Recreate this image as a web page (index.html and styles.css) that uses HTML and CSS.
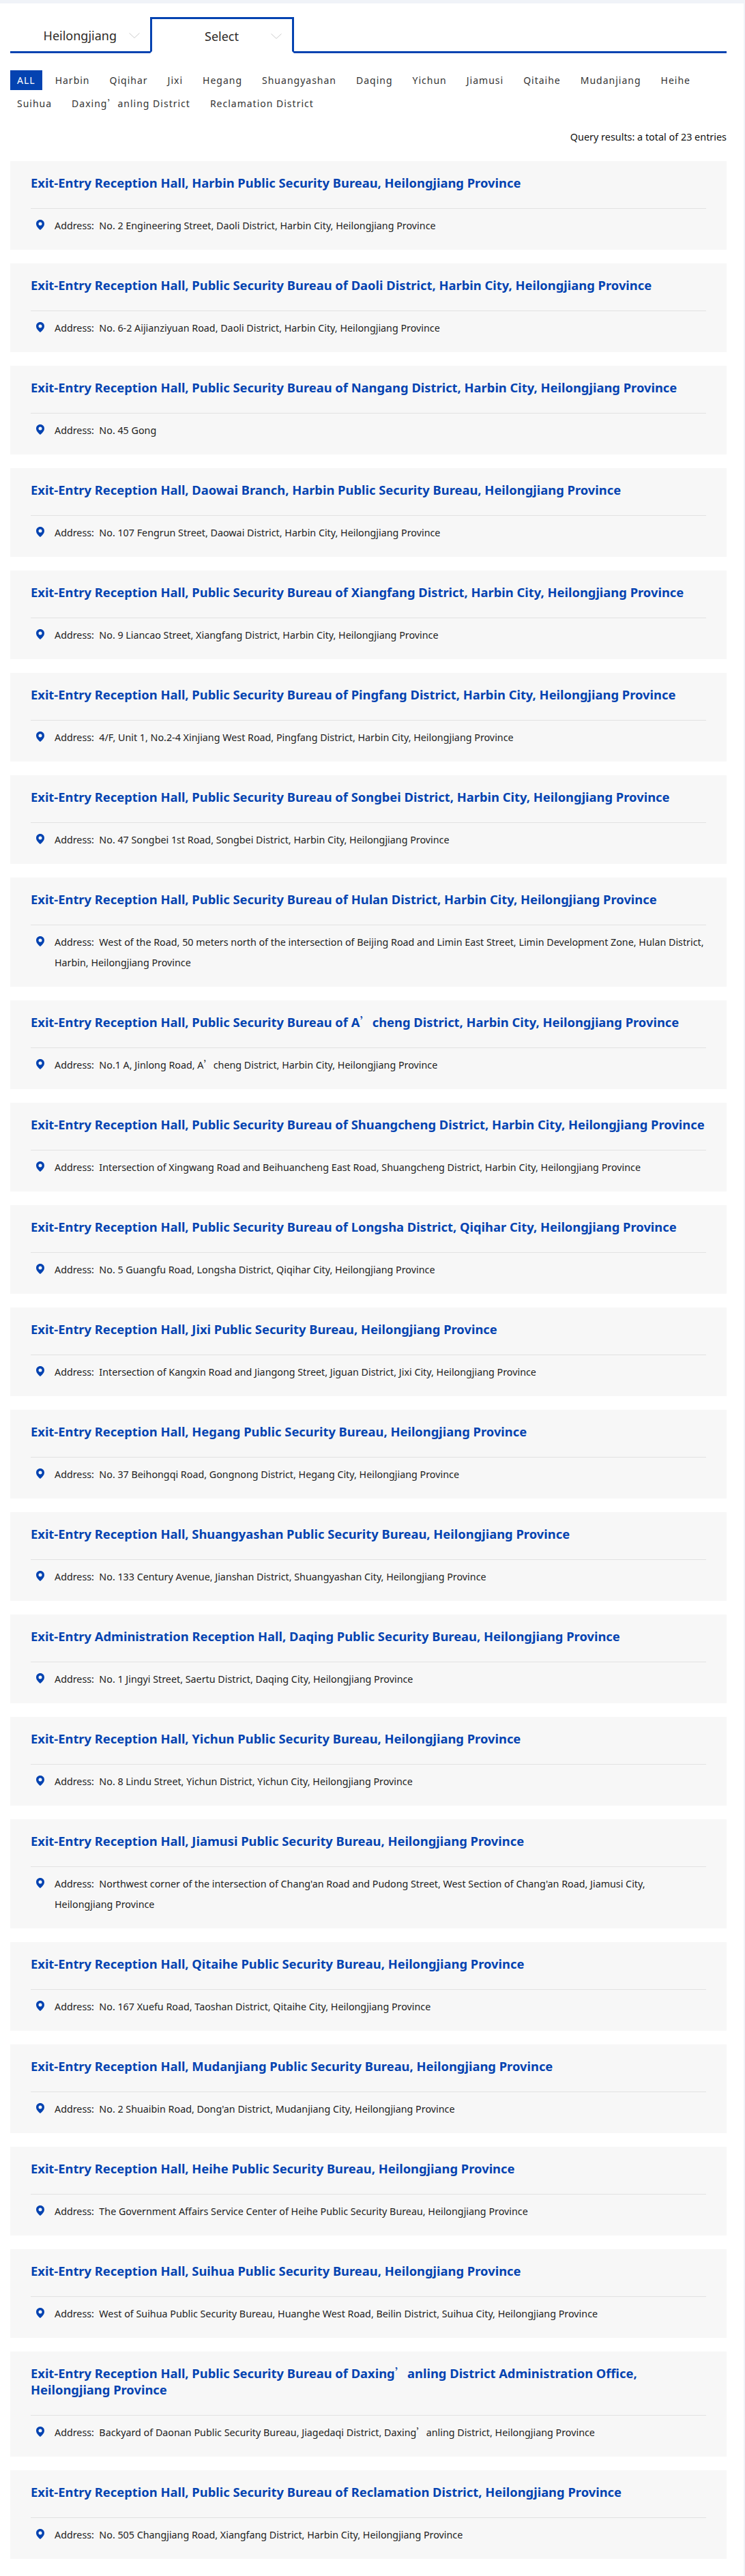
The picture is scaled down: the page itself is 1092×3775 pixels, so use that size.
FILE: index.html
```html
<!DOCTYPE html>
<html lang="en">
<head>
    <meta charset="UTF-8">
    <meta name="viewport" content="width=device-width, initial-scale=1.0">
    <title>Exit-Entry Reception Halls</title>
    <link rel="stylesheet" href="styles.css">
</head>
<body>
    <svg class="icon-defs" width="0" height="0">
        <symbol id="pin" viewBox="0 0 12 15">
            <path fill-rule="evenodd" d="M6 0C2.7 0 0 2.6 0 5.9 0 9.6 3.4 12.800 6 15c2.600-2.200 6-5.400 6-9.100C12 2.600 9.300 0 6 0zm0 3.500a2.500 2.500 0 1 1 0 5 2.500 2.500 0 0 1 0-5z"/>
        </symbol>
        <symbol id="chevron" viewBox="0 0 16 8">
            <polyline points="0.500,0.500 8,7.500 15.500,0.500"/>
        </symbol>
    </svg>

    <div class="panel">
        <!-- Province / city select -->
        <div class="area-tabs">
            <div class="area-tab">
                <span>Heilongjiang</span>
                <svg class="chevron"><use href="#chevron"/></svg>
            </div>
            <div class="area-tab active">
                <span>Select</span>
                <svg class="chevron"><use href="#chevron"/></svg>
            </div>
        </div>

        <div class="city-list">
            <a class="city current">ALL</a>
            <a class="city">Harbin</a>
            <a class="city">Qiqihar</a>
            <a class="city">Jixi</a>
            <a class="city">Hegang</a>
            <a class="city">Shuangyashan</a>
            <a class="city">Daqing</a>
            <a class="city">Yichun</a>
            <a class="city">Jiamusi</a>
            <a class="city">Qitaihe</a>
            <a class="city">Mudanjiang</a>
            <a class="city">Heihe</a>
            <a class="city">Suihua</a>
            <a class="city">Daxing<span class="wide-quote">’</span>anling District</a>
            <a class="city">Reclamation District</a>
        </div>

        <p class="result-count">Query results: a total of 23 entries</p>

        <!-- Results -->
        <div class="hall">
            <h3>Exit-Entry Reception Hall, Harbin Public Security Bureau, Heilongjiang Province</h3>
            <div class="address"><svg class="pin"><use href="#pin"/></svg><p>Address:&nbsp; No. 2 Engineering Street, Daoli District, Harbin City, Heilongjiang Province</p></div>
        </div>
        <div class="hall">
            <h3>Exit-Entry Reception Hall, Public Security Bureau of Daoli District, Harbin City, Heilongjiang Province</h3>
            <div class="address"><svg class="pin"><use href="#pin"/></svg><p>Address:&nbsp; No. 6-2 Aijianziyuan Road, Daoli District, Harbin City, Heilongjiang Province</p></div>
        </div>
        <div class="hall">
            <h3>Exit-Entry Reception Hall, Public Security Bureau of Nangang District, Harbin City, Heilongjiang Province</h3>
            <div class="address"><svg class="pin"><use href="#pin"/></svg><p>Address:&nbsp; No. 45 Gong</p></div>
        </div>
        <div class="hall">
            <h3>Exit-Entry Reception Hall, Daowai Branch, Harbin Public Security Bureau, Heilongjiang Province</h3>
            <div class="address"><svg class="pin"><use href="#pin"/></svg><p>Address:&nbsp; No. 107 Fengrun Street, Daowai District, Harbin City, Heilongjiang Province</p></div>
        </div>
        <div class="hall">
            <h3>Exit-Entry Reception Hall, Public Security Bureau of Xiangfang District, Harbin City, Heilongjiang Province</h3>
            <div class="address"><svg class="pin"><use href="#pin"/></svg><p>Address:&nbsp; No. 9 Liancao Street, Xiangfang District, Harbin City, Heilongjiang Province</p></div>
        </div>
        <div class="hall">
            <h3>Exit-Entry Reception Hall, Public Security Bureau of Pingfang District, Harbin City, Heilongjiang Province</h3>
            <div class="address"><svg class="pin"><use href="#pin"/></svg><p>Address:&nbsp; 4/F, Unit 1, No.2-4 Xinjiang West Road, Pingfang District, Harbin City, Heilongjiang Province</p></div>
        </div>
        <div class="hall">
            <h3>Exit-Entry Reception Hall, Public Security Bureau of Songbei District, Harbin City, Heilongjiang Province</h3>
            <div class="address"><svg class="pin"><use href="#pin"/></svg><p>Address:&nbsp; No. 47 Songbei 1st Road, Songbei District, Harbin City, Heilongjiang Province</p></div>
        </div>
        <div class="hall">
            <h3>Exit-Entry Reception Hall, Public Security Bureau of Hulan District, Harbin City, Heilongjiang Province</h3>
            <div class="address"><svg class="pin"><use href="#pin"/></svg><p>Address:&nbsp; West of the Road, 50 meters north of the intersection of Beijing Road and Limin East Street, Limin Development Zone, Hulan District, Harbin, Heilongjiang Province</p></div>
        </div>
        <div class="hall">
            <h3>Exit-Entry Reception Hall, Public Security Bureau of A<span class="wide-quote">’</span>cheng District, Harbin City, Heilongjiang Province</h3>
            <div class="address"><svg class="pin"><use href="#pin"/></svg><p>Address:&nbsp; No.1 A, Jinlong Road, A<span class="wide-quote">’</span>cheng District, Harbin City, Heilongjiang Province</p></div>
        </div>
        <div class="hall">
            <h3>Exit-Entry Reception Hall, Public Security Bureau of Shuangcheng District, Harbin City, Heilongjiang Province</h3>
            <div class="address"><svg class="pin"><use href="#pin"/></svg><p>Address:&nbsp; Intersection of Xingwang Road and Beihuancheng East Road, Shuangcheng District, Harbin City, Heilongjiang Province</p></div>
        </div>
        <div class="hall">
            <h3>Exit-Entry Reception Hall, Public Security Bureau of Longsha District, Qiqihar City, Heilongjiang Province</h3>
            <div class="address"><svg class="pin"><use href="#pin"/></svg><p>Address:&nbsp; No. 5 Guangfu Road, Longsha District, Qiqihar City, Heilongjiang Province</p></div>
        </div>
        <div class="hall">
            <h3>Exit-Entry Reception Hall, Jixi Public Security Bureau, Heilongjiang Province</h3>
            <div class="address"><svg class="pin"><use href="#pin"/></svg><p>Address:&nbsp; Intersection of Kangxin Road and Jiangong Street, Jiguan District, Jixi City, Heilongjiang Province</p></div>
        </div>
        <div class="hall">
            <h3>Exit-Entry Reception Hall, Hegang Public Security Bureau, Heilongjiang Province</h3>
            <div class="address"><svg class="pin"><use href="#pin"/></svg><p>Address:&nbsp; No. 37 Beihongqi Road, Gongnong District, Hegang City, Heilongjiang Province</p></div>
        </div>
        <div class="hall">
            <h3>Exit-Entry Reception Hall, Shuangyashan Public Security Bureau, Heilongjiang Province</h3>
            <div class="address"><svg class="pin"><use href="#pin"/></svg><p>Address:&nbsp; No. 133 Century Avenue, Jianshan District, Shuangyashan City, Heilongjiang Province</p></div>
        </div>
        <div class="hall">
            <h3>Exit-Entry Administration Reception Hall, Daqing Public Security Bureau, Heilongjiang Province</h3>
            <div class="address"><svg class="pin"><use href="#pin"/></svg><p>Address:&nbsp; No. 1 Jingyi Street, Saertu District, Daqing City, Heilongjiang Province</p></div>
        </div>
        <div class="hall">
            <h3>Exit-Entry Reception Hall, Yichun Public Security Bureau, Heilongjiang Province</h3>
            <div class="address"><svg class="pin"><use href="#pin"/></svg><p>Address:&nbsp; No. 8 Lindu Street, Yichun District, Yichun City, Heilongjiang Province</p></div>
        </div>
        <div class="hall">
            <h3>Exit-Entry Reception Hall, Jiamusi Public Security Bureau, Heilongjiang Province</h3>
            <div class="address"><svg class="pin"><use href="#pin"/></svg><p>Address:&nbsp; Northwest corner of the intersection of Chang'an Road and Pudong Street, West Section of Chang'an Road, Jiamusi City, Heilongjiang&nbsp;Province</p></div>
        </div>
        <div class="hall">
            <h3>Exit-Entry Reception Hall, Qitaihe Public Security Bureau, Heilongjiang Province</h3>
            <div class="address"><svg class="pin"><use href="#pin"/></svg><p>Address:&nbsp; No. 167 Xuefu Road, Taoshan District, Qitaihe City, Heilongjiang Province</p></div>
        </div>
        <div class="hall">
            <h3>Exit-Entry Reception Hall, Mudanjiang Public Security Bureau, Heilongjiang Province</h3>
            <div class="address"><svg class="pin"><use href="#pin"/></svg><p>Address:&nbsp; No. 2 Shuaibin Road, Dong'an District, Mudanjiang City, Heilongjiang Province</p></div>
        </div>
        <div class="hall">
            <h3>Exit-Entry Reception Hall, Heihe Public Security Bureau, Heilongjiang Province</h3>
            <div class="address"><svg class="pin"><use href="#pin"/></svg><p>Address:&nbsp; The Government Affairs Service Center of Heihe Public Security Bureau, Heilongjiang Province</p></div>
        </div>
        <div class="hall">
            <h3>Exit-Entry Reception Hall, Suihua Public Security Bureau, Heilongjiang Province</h3>
            <div class="address"><svg class="pin"><use href="#pin"/></svg><p>Address:&nbsp; West of Suihua Public Security Bureau, Huanghe West Road, Beilin District, Suihua City, Heilongjiang Province</p></div>
        </div>
        <div class="hall">
            <h3>Exit-Entry Reception Hall, Public Security Bureau of Daxing<span class="wide-quote">’</span>anling District Administration Office,<br>Heilongjiang Province</h3>
            <div class="address"><svg class="pin"><use href="#pin"/></svg><p>Address:&nbsp; Backyard of Daonan Public Security Bureau, Jiagedaqi District, Daxing<span class="wide-quote">’</span>anling District, Heilongjiang Province</p></div>
        </div>
        <div class="hall">
            <h3>Exit-Entry Reception Hall, Public Security Bureau of Reclamation District, Heilongjiang Province</h3>
            <div class="address"><svg class="pin"><use href="#pin"/></svg><p>Address:&nbsp; No. 505 Changjiang Road, Xiangfang District, Harbin City, Heilongjiang Province</p></div>
        </div>
    </div>
</body>
</html>
```

FILE: styles.css
```css
body {
    margin: 0;
    padding-top: 5px;
    background-color: #f0f3f8;
    font-family: "Noto Sans", "Noto Sans CJK SC", sans-serif;
    color: #222;
}

.icon-defs {
    display: block;
    height: 0;
}

/* full width quote as in the source data, must not grow the line box */
.wide-quote {
    font-family: "Noto Sans CJK SC", sans-serif;
    font-weight: 400;
    line-height: 1;
}

.panel {
    width: 1050px;
    padding: 20px 25px 25px 15px;
    background-color: #fff;
}

/* Tabs */
.area-tabs {
    display: flex;
    height: 50px;
    border-bottom: 3px solid #0443b1;
}

.area-tab {
    display: flex;
    align-items: center;
    justify-content: flex-end;
    gap: 18px;
    width: 205px;
    height: 53px;
    padding-right: 15px;
    box-sizing: border-box;
    font-size: 18px;
    color: #2d2a26;
}

.area-tab.active {
    width: 211px;
    padding-top: 3px;
    border: 3px solid #0443b1;
    border-bottom: 3px solid #fff;
    gap: 47px;
}

.chevron {
    width: 16px;
    height: 8px;
    fill: none;
    stroke: #ccc;
}

/* City filter */
.city-list {
    display: flex;
    flex-wrap: wrap;
    margin-top: 25px;
}

.city {
    height: 29px;
    margin: 0 9px 5px 0;
    padding: 0 10px;
    font-size: 14px;
    line-height: 29px;
    letter-spacing: 1px;
    color: #333;
}

.city.current {
    background-color: #0443b1;
    color: #fff;
}

.result-count {
    margin: 15px 0 20px;
    font-size: 14.4px;
    line-height: 30px;
    text-align: right;
    color: #111;
}

/* Result cards */
.hall {
    margin-bottom: 20px;
    padding: 20px 30px;
    background-color: #f7f7f7;
}

.hall:last-child {
    margin-bottom: 0;
}

.hall h3 {
    margin: 0;
    padding-bottom: 25px;
    border-bottom: 1px solid #e2e2e2;
    font-size: 18.35px;
    line-height: 24px;
    color: #0443b1;
}

.address {
    display: flex;
    padding-top: 10px;
}

.pin {
    flex: none;
    width: 12px;
    height: 15px;
    margin: 6px 15px 0 8px;
    fill: #0443b1;
}

.address p {
    margin: 0;
    font-size: 14.3px;
    line-height: 30px;
    color: #222;
}
```
